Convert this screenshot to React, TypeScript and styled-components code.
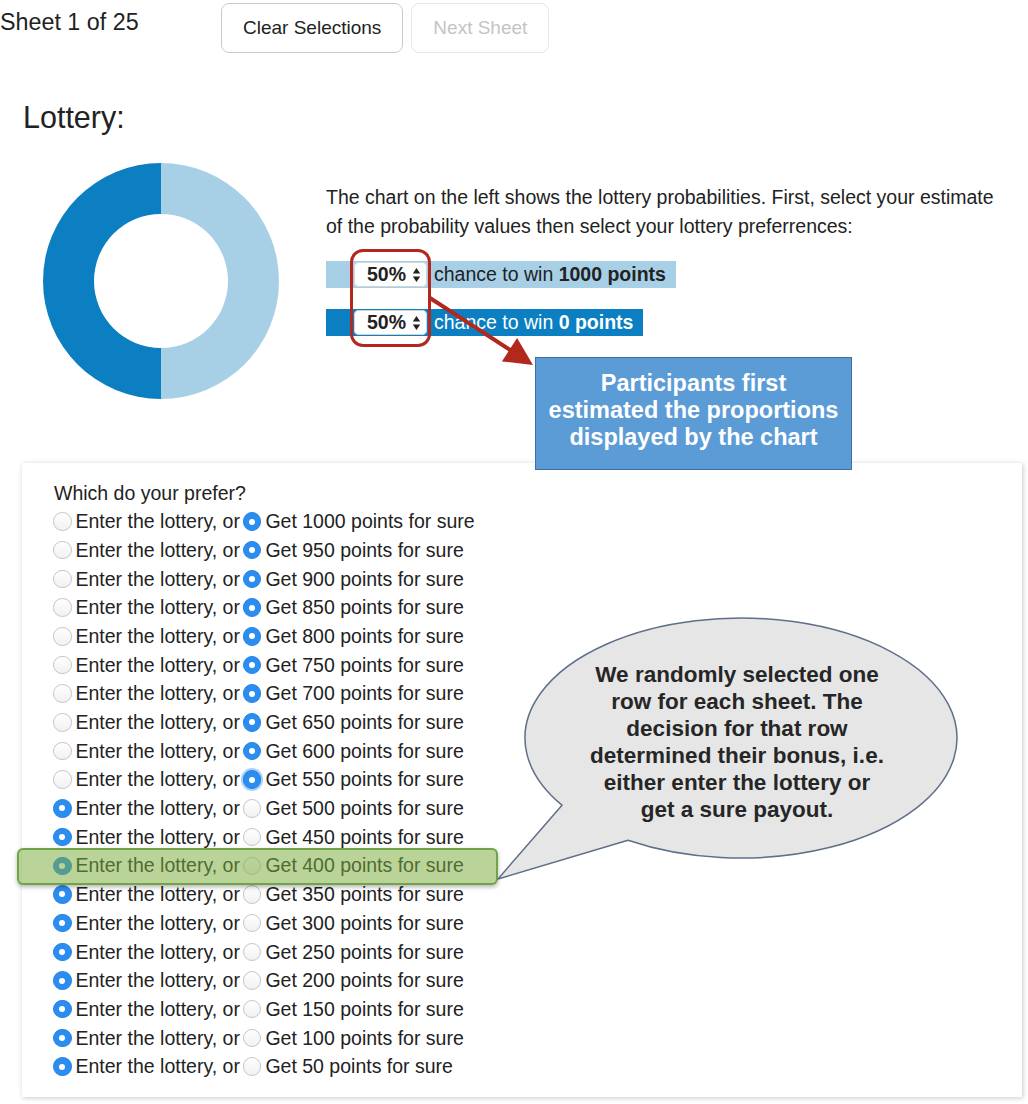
import React from "react";
import styled, { createGlobalStyle } from "styled-components";

const GlobalStyle = createGlobalStyle`
  html, body { margin: 0; padding: 0; background: #ffffff; }
  body {
    font-family: "Liberation Sans", Arial, Helvetica, sans-serif;
    color: #222222;
  }
  * { box-sizing: border-box; }
`;

const Page = styled.div`
  width: 1028px;
  min-height: 1104px;
`;

const TopBar = styled.div`
  display: flex;
  align-items: flex-start;
  height: 56px;
`;

const SheetLabel = styled.div`
  width: 221px;
  padding-top: 9px;
  font-size: 23.3px;
  line-height: 26px;
`;

const Button = styled.button`
  margin-top: 3px;
  margin-right: 8px;
  height: 50px;
  padding: 0 21px;
  font-family: inherit;
  font-size: 19px;
  background: #ffffff;
  border-radius: 8px;
  border: 1px solid #cbcbcb;
  color: #222222;
  &:disabled {
    border-color: #e8e8e8;
    color: #c4c4c4;
  }
`;

const Title = styled.h1`
  margin: 43px 0 0 23px;
  font-size: 30.5px;
  line-height: 36px;
  font-weight: normal;
`;

const ChartSection = styled.section`
  position: relative;
  display: flex;
  align-items: flex-start;
  margin-top: 28px;
  padding-left: 43px;
  height: 236px;
`;

const DonutSvg = styled.svg`
  flex: none;
  display: block;
`;

const InfoColumn = styled.div`
  margin-left: 47px;
  width: 682px;
  padding-top: 19.5px;
  display: flex;
  flex-direction: column;
  align-items: flex-start;
`;

const Intro = styled.p`
  margin: 0;
  font-size: 19.5px;
  line-height: 29px;
`;

const Band = styled.div<{ $dark?: boolean }>`
  display: flex;
  align-items: center;
  height: 27px;
  margin-top: ${(p) => (p.$dark ? "21px" : "20.5px")};
  padding: 0 10px 0 28px;
  background: ${(p) => (p.$dark ? "#0b7fc1" : "#a7d0e7")};
  color: ${(p) => (p.$dark ? "#ffffff" : "#222222")};
  font-size: 19.5px;
  white-space: nowrap;
`;

const SelectBox = styled.div`
  display: flex;
  align-items: center;
  height: 25px;
  width: 73px;
  padding: 0 0 0 13px;
  margin-right: 7px;
  background: #ffffff;
  border-radius: 5px;
  box-shadow: inset 0 0 0 1px #d4d4d4;
  color: #222222;
  font-weight: bold;
`;

const SelectArrows = styled.svg`
  margin-left: 6px;
  display: block;
`;

const RedFrame = styled.div`
  position: absolute;
  left: 350px;
  top: 86px;
  width: 81px;
  height: 98px;
  border: 3.5px solid #b3281c;
  border-radius: 13px;
  z-index: 2;
`;

const ArrowSvg = styled.svg`
  position: absolute;
  left: 425px;
  top: 127px;
  z-index: 2;
  overflow: visible;
`;

const Callout = styled.div`
  position: absolute;
  left: 535px;
  top: 194px;
  width: 317px;
  height: 113px;
  padding-top: 12px;
  background: #5b9bd6;
  border: 1px solid #41709f;
  color: #ffffff;
  font-weight: bold;
  font-size: 23.5px;
  line-height: 27px;
  text-align: center;
  white-space: nowrap;
  z-index: 3;
`;

const Card = styled.div`
  position: relative;
  margin: 64px 0 0 22px;
  width: 1000px;
  padding: 15.5px 0 16.5px 28px;
  background: #ffffff;
  box-shadow: 1px 1px 5px rgba(0, 0, 0, 0.22);
  font-size: 19.5px;
  line-height: 28.7px;
`;

const Question = styled.div`
  padding-left: 4px;
`;

const Row = styled.div`
  position: relative;
  display: flex;
  align-items: center;
  height: 28.7px;
  white-space: nowrap;
`;

const Radio = styled.span<{ $checked?: boolean; $focus?: boolean }>`
  flex: none;
  position: relative;
  width: 18.5px;
  height: 18.5px;
  margin: 0 4px 0 3px;
  border-radius: 50%;
  background: ${(p) =>
    p.$checked ? "#2b8def" : "linear-gradient(#ffffff, #f1f1f1)"};
  border: 1px solid ${(p) => (p.$checked ? "#2684e6" : "#c6c6c6")};
  box-shadow: ${(p) =>
    p.$focus ? "0 0 0 2px rgba(70, 150, 240, 0.45)" : "none"};
  &::after {
    content: "";
    display: ${(p) => (p.$checked ? "block" : "none")};
    position: absolute;
    left: 50%;
    top: 50%;
    width: 6px;
    height: 6px;
    margin: -3px 0 0 -3px;
    border-radius: 50%;
    background: #ffffff;
  }
`;

const Highlight = styled.div`
  position: absolute;
  left: -33px;
  top: -3.6px;
  width: 481px;
  height: 37px;
  border-radius: 6px;
  background: rgba(122, 171, 63, 0.53);
  border: 2px solid rgba(104, 160, 62, 0.9);
  box-shadow: 0 2px 4px rgba(0, 0, 0, 0.3);
  pointer-events: none;
  z-index: 1;
`;

const Bubble = styled.div`
  position: absolute;
  left: 473px;
  top: 149px;
  width: 470px;
  height: 272px;
  z-index: 2;
`;

const BubbleSvg = styled.svg`
  position: absolute;
  left: 0;
  top: 0;
  overflow: visible;
`;

const BubbleText = styled.div`
  position: absolute;
  left: 57px;
  top: 48.5px;
  width: 370px;
  text-align: center;
  font-weight: bold;
  font-size: 22.5px;
  line-height: 27px;
  color: #262626;
  white-space: nowrap;
`;

const Donut = () => (
  <DonutSvg width="236" height="236" viewBox="0 0 236 236">
    <path
      d="M118,0 A118,118 0 0,0 118,236 L118,185 A67,67 0 0,1 118,51 Z"
      fill="#0b7fc1"
    />
    <path
      d="M118,0 A118,118 0 0,1 118,236 L118,185 A67,67 0 0,0 118,51 Z"
      fill="#a7d0e7"
    />
  </DonutSvg>
);

const Select = ({ value }: { value: string }) => (
  <SelectBox>
    {value}
    <SelectArrows width="9" height="16" viewBox="0 0 9 16">
      <path d="M0.8,6.5 L4.5,1 L8.2,6.5 Z" fill="#222" />
      <path d="M0.8,9.5 L4.5,15 L8.2,9.5 Z" fill="#222" />
    </SelectArrows>
  </SelectBox>
);

const amounts = Array.from({ length: 20 }, (_, i) => 1000 - i * 50);

export default function App() {
  return (
    <Page>
      <GlobalStyle />
      <TopBar>
        <SheetLabel>Sheet 1 of 25</SheetLabel>
        <Button>Clear Selections</Button>
        <Button disabled>Next Sheet</Button>
      </TopBar>

      <Title>Lottery:</Title>

      <ChartSection>
        <Donut />
        <InfoColumn>
          <Intro>
            The chart on the left shows the lottery probabilities. First, select
            your estimate of the probability values then select your lottery
            preferrences:
          </Intro>
          <Band>
            <Select value="50%" />
            chance to win&nbsp;<b>1000 points</b>
          </Band>
          <Band $dark>
            <Select value="50%" />
            chance to win&nbsp;<b>0 points</b>
          </Band>
        </InfoColumn>

        <RedFrame />
        <ArrowSvg width="115" height="80" viewBox="0 0 115 80">
          <line
            x1="5"
            y1="8"
            x2="86"
            y2="60.5"
            stroke="#b3281c"
            strokeWidth="4"
          />
          <polygon points="108,75 76.9,71.4 92.1,48" fill="#b3281c" />
        </ArrowSvg>
        <Callout>
          Participants first
          <br />
          estimated the proportions
          <br />
          displayed by the chart
        </Callout>
      </ChartSection>

      <Card>
        <Question>Which do your prefer?</Question>
        {amounts.map((amt) => {
          const sure = amt >= 550;
          return (
            <Row key={amt}>
              {amt === 400 && <Highlight />}
              <Radio $checked={!sure} />
              Enter the lottery, or
              <Radio $checked={sure} $focus={amt === 550} />
              Get {amt} points for sure
            </Row>
          );
        })}

        <Bubble>
          <BubbleSvg width="470" height="272" viewBox="0 0 470 272">
            <path
              d="M3,267 L67,193.2 A216,120 0 1,1 133,228.3 Z"
              fill="#e6e6e6"
              stroke="#5f6f8a"
              strokeWidth="1.5"
              strokeLinejoin="round"
            />
          </BubbleSvg>
          <BubbleText>
            We randomly selected one
            <br />
            row for each sheet. The
            <br />
            decision for that row
            <br />
            determined their bonus, i.e.
            <br />
            either enter the lottery or
            <br />
            get a sure payout.
          </BubbleText>
        </Bubble>
      </Card>
    </Page>
  );
}
